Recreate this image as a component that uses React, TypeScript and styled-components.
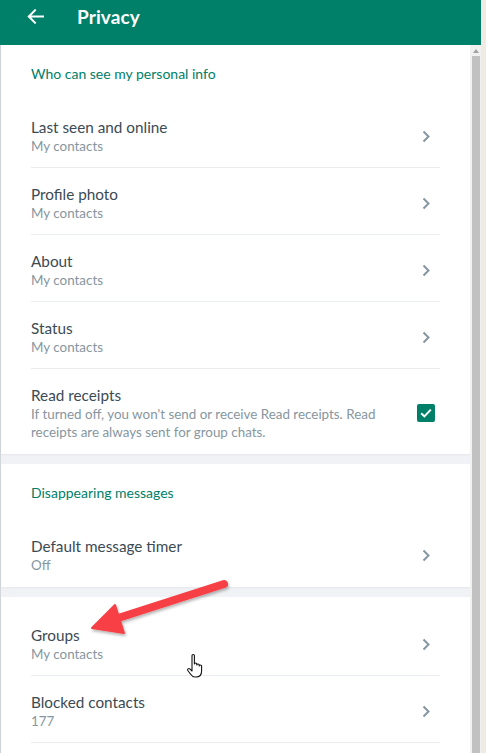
import React from "react";
import styled, { createGlobalStyle } from "styled-components";

const GlobalStyle = createGlobalStyle`
  html, body {
    margin: 0;
    padding: 0;
    background: #efeae2;
  }
  body {
    font-family: Lato, "Segoe UI", "Liberation Sans", sans-serif;
    -webkit-font-smoothing: antialiased;
  }
`;

type RowItem = {
  title: string;
  subtitle: string;
  checked?: boolean;
  divider?: boolean;
};

type Section = {
  heading?: string;
  items: RowItem[];
};

const sections: Section[] = [
  {
    heading: "Who can see my personal info",
    items: [
      { title: "Last seen and online", subtitle: "My contacts", divider: true },
      { title: "Profile photo", subtitle: "My contacts", divider: true },
      { title: "About", subtitle: "My contacts", divider: true },
      { title: "Status", subtitle: "My contacts", divider: true },
      {
        title: "Read receipts",
        subtitle:
          "If turned off, you won't send or receive Read receipts. Read receipts are always sent for group chats.",
        checked: true,
      },
    ],
  },
  {
    heading: "Disappearing messages",
    items: [{ title: "Default message timer", subtitle: "Off" }],
  },
  {
    items: [
      { title: "Groups", subtitle: "My contacts", divider: true },
      { title: "Blocked contacts", subtitle: "177", divider: true },
    ],
  },
];

const Page = styled.div`
  position: relative;
  width: 481px;
  height: 753px;
  display: flex;
  flex-direction: column;
  overflow: hidden;
`;

const Header = styled.header`
  height: 45px;
  box-sizing: border-box;
  flex: none;
  background: #008069;
  display: flex;
  align-items: center;
  padding: 0 0 12px 27px;
  gap: 33px;
  color: #fff;
`;

const Title = styled.h1`
  margin: 0;
  font-size: 19px;
  font-weight: 700;
  letter-spacing: 0.1px;
`;

const Body = styled.div`
  flex: 1;
  display: flex;
  min-height: 0;
`;

const Content = styled.div`
  flex: 1;
  background: #f0f2f5;
  border-left: 1px solid #d1d7db;
  display: flex;
  flex-direction: column;
  gap: 10px;
`;

const Card = styled.section<{ $pad?: boolean; $grow?: boolean }>`
  background: #fff;
  padding-top: ${(p) => (p.$pad ? "12px" : "0")};
  flex: ${(p) => (p.$grow ? "1" : "none")};
  box-shadow: 0 1px 2px rgba(11, 20, 26, 0.05);
`;

const Heading = styled.div`
  height: 56px;
  box-sizing: border-box;
  padding: 20px 0 0 30px;
  font-size: 14px;
  line-height: 18px;
  color: #008069;
`;

const Row = styled.div`
  display: flex;
  align-items: center;
  padding-left: 30px;
  cursor: pointer;
`;

const RowInner = styled.div<{ $divider?: boolean }>`
  flex: 1;
  display: flex;
  align-items: center;
  margin-right: 30px;
  padding: 16px 0 12px;
  border-bottom: 1px solid ${(p) => (p.$divider ? "#e9edef" : "transparent")};
  min-height: 38px;
`;

const Texts = styled.div`
  flex: 1;
  min-width: 0;
`;

const RowTitle = styled.div`
  font-size: 15.3px;
  line-height: 20px;
  color: #3b4a54;
`;

const RowSub = styled.div`
  font-size: 13.4px;
  line-height: 18px;
  color: #8696a0;
  padding-right: 20px;
`;

const Chevron = styled.svg`
  width: 8px;
  height: 13px;
  flex: none;
  margin-right: 10px;
`;

const Checkbox = styled.span`
  width: 18px;
  height: 18px;
  flex: none;
  border-radius: 2px;
  background: #008069;
  display: flex;
  align-items: center;
  justify-content: center;
  margin-right: 5px;
`;

const Scrollbar = styled.div`
  width: 11px;
  flex: none;
  background: #f1f1f1;
  display: flex;
  flex-direction: column;
  align-items: center;
  padding-top: 4px;
  gap: 3px;
`;

const ScrollArrow = styled.div`
  width: 0;
  height: 0;
  border-left: 3px solid transparent;
  border-right: 3px solid transparent;
  border-bottom: 4px solid #a3a3a3;
`;

const Thumb = styled.div`
  width: 8px;
  flex: 1;
  background: #c1c1c1;
`;

const Overlay = styled.svg`
  position: absolute;
  left: 0;
  top: 0;
  pointer-events: none;
`;

const BackArrow = () => (
  <svg width="17" height="15" viewBox="0 0 17 15" fill="none">
    <path
      d="M16 7.5H2M8 1.3L1.8 7.5 8 13.7"
      stroke="#fff"
      strokeWidth="2"
      strokeLinecap="square"
    />
  </svg>
);

const ChevronIcon = () => (
  <Chevron viewBox="0 0 8 13">
    <path d="M1.5 1.5l5 5-5 5" fill="none" stroke="#8696a0" strokeWidth="2" />
  </Chevron>
);

const CheckIcon = () => (
  <svg width="12" height="10" viewBox="0 0 12 10">
    <path
      d="M1.2 5.2l3.2 3.2L10.8 1.6"
      fill="none"
      stroke="#fff"
      strokeWidth="2"
    />
  </svg>
);

const App = () => {
  return (
    <Page>
      <GlobalStyle />
      <Header>
        <BackArrow />
        <Title>Privacy</Title>
      </Header>
      <Body>
        <Content>
          {sections.map((section, i) => (
            <Card
              key={i}
              $pad={!section.heading}
              $grow={i === sections.length - 1}
            >
              {section.heading ? <Heading>{section.heading}</Heading> : null}
              {section.items.map((item) => (
                <Row key={item.title}>
                  <RowInner $divider={item.divider}>
                    <Texts>
                      <RowTitle>{item.title}</RowTitle>
                      <RowSub>{item.subtitle}</RowSub>
                    </Texts>
                    {item.checked ? (
                      <Checkbox>
                        <CheckIcon />
                      </Checkbox>
                    ) : (
                      <ChevronIcon />
                    )}
                  </RowInner>
                </Row>
              ))}
            </Card>
          ))}
        </Content>
        <Scrollbar>
          <ScrollArrow />
          <Thumb />
        </Scrollbar>
      </Body>
      {/* annotation arrow and hand cursor drawn over the screenshot */}
      <Overlay width="481" height="753" viewBox="0 0 481 753">
        <defs>
          <filter id="shadow" x="-20%" y="-40%" width="140%" height="180%">
            <feDropShadow dx="1" dy="2" stdDeviation="1.5" floodColor="#000" floodOpacity="0.3" />
          </filter>
        </defs>
        <g filter="url(#shadow)" fill="#f64045" stroke="#f64045">
          <line x1="224" y1="584" x2="112" y2="620" strokeWidth="8" strokeLinecap="round" />
          <path d="M92 628L115 605L124 633Z" strokeWidth="2" strokeLinejoin="round" />
        </g>
        <g transform="translate(187 653)">
          <path
            d="M5 2.5c0-1.4 2.4-1.4 2.4 0V11c0-1.4 2.4-1.4 2.4 0v1c0-1.4 2.4-1.4 2.4 0v1c0-1.4 2.4-1.4 2.4 0v5c0 3.5-2 6-5.5 6H8c-2.2 0-3.4-1.2-4.6-3L0.8 17.5c-0.8-1.3 0.8-2.6 2-1.6L5 18z"
            fill="#fff"
            stroke="#111"
            strokeWidth="1.1"
            strokeLinejoin="round"
          />
        </g>
      </Overlay>
    </Page>
  );
};

export default App;
